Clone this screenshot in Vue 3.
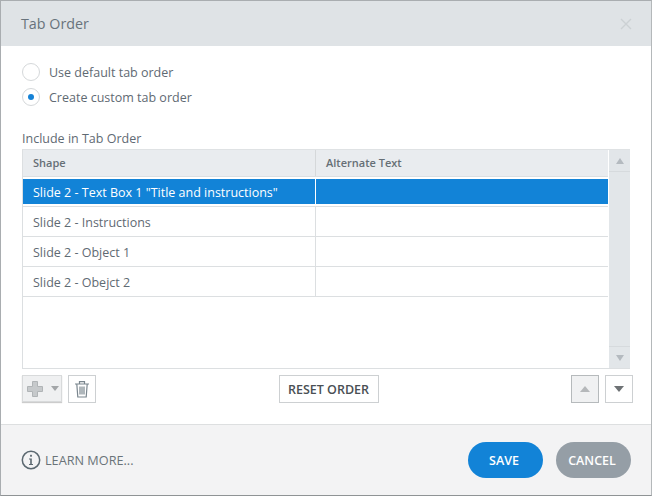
<script setup>
const rows = [
  'Slide 2 - Text Box 1 "Title and instructions"',
  'Slide 2 - Instructions',
  'Slide 2 - Object 1',
  'Slide 2 - Obejct 2'
]
</script>

<template>
  <div class="dialog">
    <header class="head">
      <span class="title">Tab Order</span>
      <svg class="close" width="12" height="12" viewBox="0 0 12 12"><path d="M1 1l10 10M11 1L1 11" stroke="#ccd1d4" stroke-width="1.4" fill="none"/></svg>
    </header>
    <main class="body">
      <div class="radios">
        <label class="radio"><span class="dot"></span>Use default tab order</label>
        <label class="radio"><span class="dot on"></span>Create custom tab order</label>
      </div>
      <div class="inc">Include in Tab Order</div>
      <div class="table">
        <div class="list">
          <div class="thead">
            <div class="c1">Shape</div>
            <div class="c2">Alternate Text</div>
          </div>
          <div v-for="(r, i) in rows" :key="r" class="row" :class="{ sel: i === 0 }">
            <div class="c1">{{ r }}</div>
            <div class="c2"></div>
          </div>
        </div>
        <div class="scroll">
          <div class="sbtn top"><svg width="8" height="6" viewBox="0 0 8 6"><path d="M4 0l4 6H0z" fill="#b4babf"/></svg></div>
          <div class="sbtn bot"><svg width="8" height="6" viewBox="0 0 8 6"><path d="M0 0h8L4 6z" fill="#b4babf"/></svg></div>
        </div>
      </div>
      <div class="tools">
        <div class="left">
          <button class="add">
            <svg width="16" height="16" viewBox="0 0 16 16"><path d="M5.5 .5h5v5h5v5h-5v5h-5v-5h-5v-5h5z" fill="#c6c9cb" stroke="#b0b4b6"/></svg>
            <svg width="8" height="5" viewBox="0 0 8 5"><path d="M0 0h8L4 5z" fill="#a3a6a8"/></svg>
          </button>
          <button class="sq">
            <svg width="16" height="18" viewBox="0 0 16 18" fill="none" stroke="#7a868e" stroke-width="1.2"><path d="M1 4h14M5.5 4V1.6h5V4M2.8 4l1 13h8.4l1-13M6 6.5v8M8 6.5v8M10 6.5v8"/></svg>
          </button>
        </div>
        <button class="reset">RESET ORDER</button>
        <div class="right">
          <button class="sq dis"><svg width="10" height="6" viewBox="0 0 10 6"><path d="M5 0l5 6H0z" fill="#b5b8ba"/></svg></button>
          <button class="sq"><svg width="10" height="6" viewBox="0 0 10 6"><path d="M0 0h10L5 6z" fill="#6e7275"/></svg></button>
        </div>
      </div>
    </main>
    <footer class="foot">
      <a class="learn">
        <svg width="20" height="20" viewBox="0 0 20 20"><circle cx="10" cy="10" r="8.7" fill="none" stroke="#5b6870" stroke-width="1.5"/><rect x="9.1" y="4.8" width="1.8" height="1.9" fill="#5b6870"/><path d="M8 8.4h2.8v5.6H12v1H8v-1h1.2V9.4H8z" fill="#5b6870"/></svg>
        LEARN MORE...
      </a>
      <div class="acts">
        <button class="pill save">SAVE</button>
        <button class="pill cancel">CANCEL</button>
      </div>
    </footer>
  </div>
</template>

<style>
html, body { margin: 0; background: #fff; }
</style>

<style scoped>
.dialog {
  box-sizing: border-box;
  width: 652px;
  height: 496px;
  border: 1px solid #a9adb0;
  border-right-color: #b4b8ba;
  border-bottom-color: #8f9395;
  display: flex;
  flex-direction: column;
  font-family: "Open Sans", "Noto Sans", sans-serif;
  font-size: 12.5px;
  color: #5f6a73;
  background: #fff;
  overflow: hidden;
}
.head {
  height: 45px;
  flex: none;
  background: #dfe3e6;
  display: flex;
  align-items: center;
  justify-content: space-between;
  padding: 0 20px;
  box-sizing: border-box;
}
.title { font-size: 14.3px; color: #68737c; }
.close { margin-right: -1px; }
.body {
  flex: 1;
  padding: 0 21px 0 21px;
  display: flex;
  flex-direction: column;
  min-height: 0;
}
.radios { padding-top: 17px; display: flex; flex-direction: column; gap: 7px; }
.radio { display: flex; align-items: center; gap: 9px; height: 18px; }
.dot {
  box-sizing: border-box;
  width: 18px;
  height: 18px;
  border-radius: 50%;
  border: 1px solid #d5d8da;
  display: flex;
  align-items: center;
  justify-content: center;
  background: #fff;
}
.dot.on::after {
  content: "";
  width: 6px;
  height: 6px;
  border-radius: 50%;
  background: #1582d6;
}
.inc { margin-top: 24px; height: 19px; line-height: 17px; }
.table {
  display: flex;
  height: 220px;
  box-sizing: border-box;
  border: 1px solid #dcdfe1;
  border-top-color: #dfe2e4;
  border-right: 0;
}
.list { flex: 1; min-width: 0; }
.thead { height: 26px; display: flex; background: #e9ecef; border-bottom: 1px solid #dcdfe1; font-weight: 600; font-size: 11px; color: #666f76; line-height: 26px; }
.thead .c1 { border-right-color: #d5d8da; }
.c1 { width: 293px; box-sizing: border-box; padding-left: 10px; border-right: 1px solid #dcdfe1; flex: none; white-space: nowrap; }
.c2 { flex: 1; padding-left: 10px; }
.row { display: flex; height: 30px; line-height: 31px; border-bottom: 1px solid #dcdfe1; box-sizing: border-box; }
.row.sel {
  background: #1283d7;
  color: #fff;
  box-shadow: inset 0 2px 0 #fff, inset 0 -2px 0 #fff;
}
.row.sel .c1 { border-right-color: #fff; }
.scroll {
  width: 21px;
  flex: none;
  background: #e2e6e9;
  margin: 0 0 0 1px;
  display: flex;
  flex-direction: column;
  justify-content: space-between;
}
.sbtn { height: 21px; display: flex; align-items: center; justify-content: center; }
.sbtn.top { border-bottom: 1px solid #d6dadd; }
.sbtn.bot { border-top: 1px solid #d6dadd; }
.tools {
  display: flex;
  align-items: center;
  justify-content: space-between;
  margin-top: 6px;
  height: 28px;
}
.left, .right { display: flex; gap: 6px; width: 200px; }
.right { justify-content: flex-end; margin-right: -3px; }
button { font-family: inherit; cursor: pointer; padding: 0; }
.add {
  width: 40px;
  height: 27px;
  box-sizing: border-box;
  background: #eff0f1;
  border: 1px solid #d8dadb;
  box-shadow: 0 1px 1px #ccc;
  display: flex;
  align-items: center;
  gap: 8px;
  padding-left: 4px;
}
.sq {
  width: 28px;
  height: 28px;
  box-sizing: border-box;
  background: #fff;
  border: 1px solid #cdd0d2;
  display: flex;
  align-items: center;
  justify-content: center;
}
.sq.dis { background: #f0f1f2; border-color: #b6babc; }
.reset {
  width: 100px;
  height: 28px;
  box-sizing: border-box;
  background: #fff;
  border: 1px solid #cdd0d2;
  font-size: 12.5px;
  font-weight: 600;
  color: #4a4f54;
  margin-left: 2px;
}
.foot {
  height: 71px;
  flex: none;
  box-sizing: border-box;
  background: #f3f3f4;
  border-top: 1px solid #dddfe0;
  display: flex;
  align-items: center;
  justify-content: space-between;
  padding: 0 20px;
}
.learn { display: flex; align-items: center; gap: 4px; font-size: 12.7px; color: #6a7379; }
.acts { display: flex; gap: 13px; }
.pill {
  width: 75px;
  height: 36px;
  border: 0;
  border-radius: 18px;
  color: #fff;
  font-size: 12.5px;
  font-weight: 600;
  padding-right: 3px;
}
.save { background: #1283d7; }
.cancel { background: #959ea6; }
</style>
